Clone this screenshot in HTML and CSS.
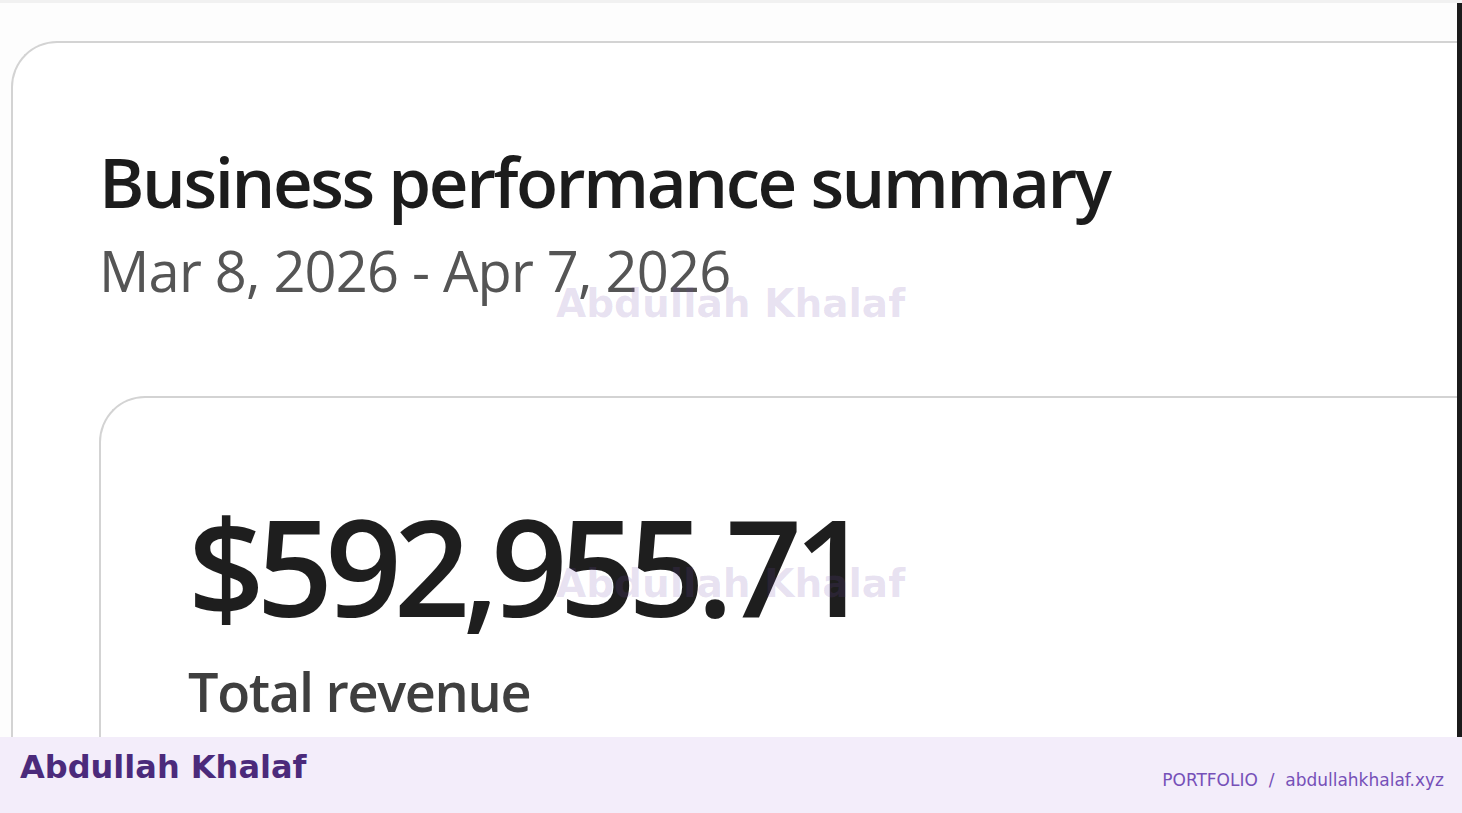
FILE: index.html
```html
<!DOCTYPE html>
<html>
<head>
<meta charset="utf-8">
<link rel="stylesheet" href="styles.css">
</head>
<body>
<div class="page">
  <main class="stage">
    <div class="viewport">
      <section class="card">
        <h1 class="title">Business performance summary</h1>
        <p class="range">Mar 8, 2026 - Apr 7, 2026</p>
        <div class="kpi">
          <div class="amount">$592,955.71</div>
          <div class="label">Total revenue</div>
        </div>
      </section>
    </div>
    <div class="edge"></div>
    <div class="mark mark-1">Abdullah Khalaf</div>
    <div class="mark mark-2">Abdullah Khalaf</div>
  </main>
  <footer class="footer">
    <div class="brand">Abdullah Khalaf</div>
    <div class="links">PORTFOLIO&nbsp;&nbsp;/&nbsp;&nbsp;abdullahkhalaf.xyz</div>
  </footer>
</div>
</body>
</html>
```

FILE: styles.css
```css
* { box-sizing: border-box; }
html, body { margin: 0; padding: 0; }
body { width: 1462px; height: 813px; overflow: hidden; background: #fff; }

.page { display: flex; flex-direction: column; height: 813px; }

.stage {
  position: relative;
  height: 737px;
  display: flex;
  overflow: hidden;
  background: #fdfdfd;
  border-top: 3px solid #f1f1f1;
}
.viewport { flex: 1; padding: 38px 0 0 11px; overflow: hidden; }
.edge { width: 5px; background: #1b1b1b; }

.card {
  background: #fff;
  border: 2px solid #d3d3d3;
  border-right: none;
  border-radius: 46px 0 0 0;
  padding: 98px 0 0 86px;
  height: 900px;
}
.title {
  margin: 0;
  font-family: "Open Sans", sans-serif;
  font-weight: 600;
  font-size: 69px;
  line-height: 80px;
  color: #1c1c1c;
  letter-spacing: -2.4px;
}
.range {
  margin: 14px 0 0;
  font-family: "Open Sans", sans-serif;
  font-weight: 400;
  font-size: 56px;
  line-height: 70px;
  color: #555;
  letter-spacing: -0.8px;
}
.kpi {
  margin-top: 91px;
  border: 2px solid #d3d3d3;
  border-right: none;
  border-radius: 46px 0 0 0;
  padding: 97px 0 0 87px;
  height: 600px;
  background: #fff;
}
.amount {
  font-family: "Open Sans", sans-serif;
  font-weight: 600;
  font-size: 134px;
  line-height: 140px;
  color: #1e1e1e;
  letter-spacing: -8px;
}
.label {
  margin-top: 24px;
  font-family: "Open Sans", sans-serif;
  font-weight: 600;
  font-size: 54px;
  line-height: 64px;
  color: #3f3f3f;
  letter-spacing: -1.3px;
}

.mark {
  position: absolute;
  left: 556px;
  font-family: "DejaVu Sans", sans-serif;
  font-weight: 700;
  font-size: 39px;
  line-height: 44px;
  color: rgba(110, 70, 170, 0.16);
  white-space: nowrap;
}
.mark-1 { top: 279px; }
.mark-2 { top: 559px; }

.footer {
  height: 76px;
  background: #f3edfa;
  display: flex;
  justify-content: space-between;
  padding: 0 18px 0 20px;
}
.brand {
  font-family: "DejaVu Sans", sans-serif;
  font-weight: 700;
  font-size: 32px;
  line-height: 38px;
  padding-top: 11px;
  color: #4b2a7b;
}
.links {
  font-family: "DejaVu Sans", sans-serif;
  font-size: 17px;
  line-height: 20px;
  padding-top: 33px;
  color: #7650b8;
}
```
